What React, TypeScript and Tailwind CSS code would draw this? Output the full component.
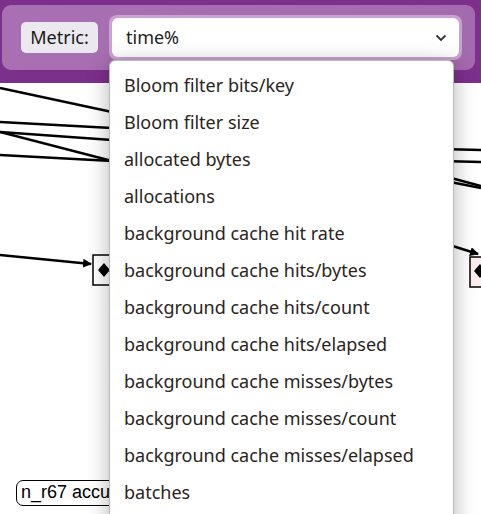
import React from 'react';

const metrics = [
  'Bloom filter bits/key',
  'Bloom filter size',
  'allocated bytes',
  'allocations',
  'background cache hit rate',
  'background cache hits/bytes',
  'background cache hits/count',
  'background cache hits/elapsed',
  'background cache misses/bytes',
  'background cache misses/count',
  'background cache misses/elapsed',
  'batches',
];

const uiFont = { fontFamily: '"Noto Sans", "Open Sans", sans-serif' };

// Plan graph drawn behind the metric picker
function PlanGraph() {
  return (
    <svg className="absolute left-0 top-0" width={481} height={514} viewBox="0 0 481 514">
      <defs>
        <marker id="arrow" markerWidth="9" markerHeight="9" refX="8" refY="4.5" orient="auto" markerUnits="userSpaceOnUse">
          <path d="M0,0 L9,4.5 L0,9 Z" fill="#000" />
        </marker>
      </defs>
      <g stroke="#000" strokeWidth={2.5} fill="none">
        <line x1={0} y1={88} x2={112} y2={112} />
        <line x1={0} y1={122} x2={112} y2={128} />
        <line x1={0} y1={132} x2={112} y2={140} />
        <line x1={0} y1={132} x2={112} y2={161} />
        <line x1={0} y1={155} x2={112} y2={161} />
        <line x1={0} y1={255} x2={91} y2={264} markerEnd="url(#arrow)" />
        <line x1={440} y1={149} x2={481} y2={150} />
        <line x1={440} y1={161} x2={481} y2={162} />
        <line x1={440} y1={175} x2={481} y2={186} />
        <line x1={440} y1={180} x2={481} y2={188} />
        <line x1={440} y1={242} x2={478} y2={254} markerEnd="url(#arrow)" />
      </g>
      <rect x={93} y={255} width={40} height={30} fill="#fff" stroke="#000" strokeWidth={1.5} />
      <path d="M98,270 L104,263 L110,270 L104,277 Z" fill="#000" />
      <rect x={470} y={257} width={30} height={30} fill="#fdeeee" stroke="#000" strokeWidth={1.5} />
      <path d="M474,271 L480,264 L486,271 L480,278 Z" fill="#000" />
    </svg>
  );
}

export default function App() {
  return (
    <div className="relative w-[481px] h-[514px] overflow-hidden bg-white">
      <PlanGraph />

      {/* Node label partly hidden by the dropdown */}
      <div
        className="absolute left-[16px] top-[480px] h-[26px] w-[160px] overflow-hidden whitespace-nowrap rounded-[7px] border-[1.5px] border-black bg-white pl-[4px] text-[18px] leading-[23px] text-black"
        style={{ fontFamily: '"Liberation Sans", Arial, sans-serif' }}
      >
        n_r67 accu
      </div>

      {/* Header */}
      <div className="relative h-[83px] bg-[#7d2f8c] pt-[5px] pl-[2px]">
        <div
          className="flex h-[65px] w-[473px] items-center rounded-[9px] bg-gradient-to-r from-[#a86fb3] to-[#a46aae] pl-[19px]"
          style={uiFont}
        >
          <div className="flex h-[31px] w-[77px] items-center justify-center rounded-[5px] bg-[#ebe8ef] text-[18px] text-[#1a1a1a]">
            Metric:
          </div>
          <div className="ml-[11px] h-[45px] w-[353px] rounded-[8px] bg-[#c9a3d1] p-[3px]">
            <div className="flex h-full items-center justify-between rounded-[6px] bg-white pl-[14px] pr-[12px] text-[18px] text-[#222]">
              <span>time%</span>
              <svg width="12" height="8" viewBox="0 0 12 8" fill="none" stroke="#333" strokeWidth="1.8">
                <path d="M1.5 1.5 L6 6 L10.5 1.5" />
              </svg>
            </div>
          </div>
        </div>
      </div>

      {/* Open dropdown list */}
      <div
        className="absolute left-[109px] top-[60px] w-[345px] h-[480px] rounded-t-[6px] border border-[#b9b9b9] bg-white pt-[6px] shadow-[0_4px_22px_rgba(0,0,0,0.3)]"
        style={uiFont}
      >
        {metrics.map((m) => (
          <div key={m} className="flex h-[37px] items-center whitespace-nowrap pl-[14px] text-[18px] text-[#2a2420]">
            {m}
          </div>
        ))}
      </div>
    </div>
  );
}
